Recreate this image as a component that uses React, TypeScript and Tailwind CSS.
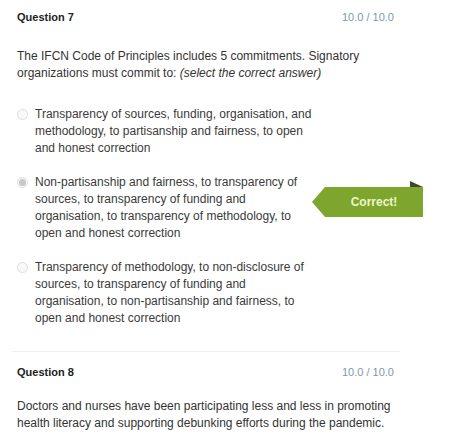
import React from 'react';

const options = [
  {
    text: 'Transparency of sources, funding, organisation, and methodology, to partisanship and fairness, to open and honest correction',
    checked: false,
  },
  {
    text: 'Non-partisanship and fairness, to transparency of sources, to transparency of funding and organisation, to transparency of methodology, to open and honest correction',
    checked: true,
  },
  {
    text: 'Transparency of methodology, to non-disclosure of sources, to transparency of funding and organisation, to non-partisanship and fairness, to open and honest correction',
    checked: false,
  },
];

function Radio({ checked }: { checked: boolean }) {
  return (
    <span className="mt-[3px] flex h-[11px] w-[11px] shrink-0 items-center justify-center rounded-full border border-[#dedede] bg-[#f9f9f9]">
      {checked && <span className="h-[7px] w-[7px] rounded-full bg-[#c8c8c8]" />}
    </span>
  );
}

function CorrectBadge() {
  return (
    <div className="absolute left-[295px] top-[7px] h-[38px] w-[112px]">
      <svg width="112" height="38" viewBox="0 0 112 38" className="absolute left-0 top-0">
        <path d="M98 0 L111 6 L98 6 Z" fill="#3d4a2a" />
        <path d="M13 6 L111 6 L111 36 L13 36 L0 21 Z" fill="#7ea52e" />
      </svg>
      <span className="absolute left-[13px] right-[1px] top-[6px] flex h-[30px] items-center justify-center text-[12px] font-bold text-[#eef5c9]">
        Correct!
      </span>
    </div>
  );
}

export default function App() {
  return (
    <div className="h-[445px] w-[465px] overflow-hidden bg-white font-['Liberation_Sans',Arial,sans-serif] text-[#333]">
      <div className="w-[400px] pl-[17px] pt-[10px]">
        <div className="flex items-center justify-between pr-[6px]">
          <h2 className="text-[11px] font-bold leading-[14px] text-[#222]">Question 7</h2>
          <span className="text-[11px] leading-[14px] text-[#7c98ad]">10.0 / 10.0</span>
        </div>
        <p className="mt-[24px] w-[370px] text-[12px] leading-[17px] text-[#333]">
          The IFCN Code of Principles includes 5 commitments. Signatory organizations must commit to:{' '}
          <span className="italic">(select the correct answer)</span>
        </p>

        <div className="mt-[24px] flex flex-col gap-[17px]">
          {options.map((o, i) => (
            <div key={i} className="relative flex gap-[7px]">
              <Radio checked={o.checked} />
              <p className="w-[280px] text-[12px] leading-[17px] text-[#3a3a3a]">{o.text}</p>
              {o.checked && <CorrectBadge />}
            </div>
          ))}
        </div>
      </div>

      <div className="ml-[12px] mt-[24px] h-px w-[388px] bg-[#eeeeee]" />

      <div className="w-[400px] pl-[17px] pt-[13px]">
        <div className="flex items-center justify-between pr-[6px]">
          <h2 className="text-[11px] font-bold leading-[14px] text-[#222]">Question 8</h2>
          <span className="text-[11px] leading-[14px] text-[#7c98ad]">10.0 / 10.0</span>
        </div>
        <p className="mt-[19px] w-[380px] text-[12px] leading-[17px] text-[#333]">
          Doctors and nurses have been participating less and less in promoting health literacy and supporting
          debunking efforts during the pandemic.
        </p>
      </div>
    </div>
  );
}
